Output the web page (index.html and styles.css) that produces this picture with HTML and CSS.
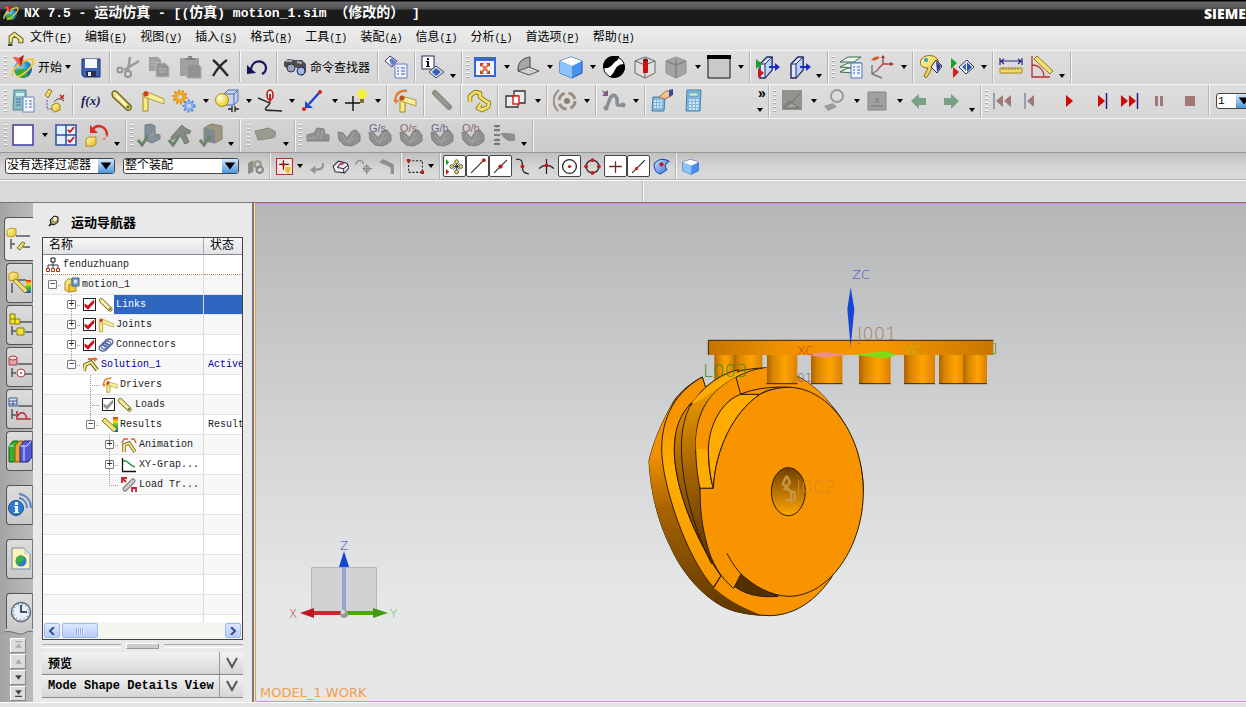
FILE: index.html
```
<!DOCTYPE html>
<html lang="zh-CN">
<head>
    <meta charset="UTF-8">
    <meta name="viewport" content="width=device-width, initial-scale=1.0">
    <title>NX 7.5 - 运动仿真</title>
    <link rel="stylesheet" href="styles.css">
</head>
<body>

<!-- icon sprite -->
<svg class="sprite" aria-hidden="true">
    <defs>
        <linearGradient id="gold" x1="0" y1="0" x2="1" y2="1"><stop offset="0" stop-color="#fffbb0"/><stop offset="1" stop-color="#e8b820"/></linearGradient>
        <linearGradient id="blue" x1="0" y1="0" x2="1" y2="1"><stop offset="0" stop-color="#c8e4ff"/><stop offset="1" stop-color="#2a72e0"/></linearGradient>
        <linearGradient id="rain" x1="0" y1="0" x2="0" y2="1"><stop offset="0" stop-color="#e02010"/><stop offset=".3" stop-color="#ffd800"/><stop offset=".6" stop-color="#30c030"/><stop offset="1" stop-color="#2050e0"/></linearGradient>
        <radialGradient id="globe" cx=".35" cy=".35" r=".8"><stop offset="0" stop-color="#8fe0f0"/><stop offset=".5" stop-color="#1f8fc8"/><stop offset="1" stop-color="#0a4a90"/></radialGradient>
        <radialGradient id="ball" cx=".35" cy=".35" r=".8"><stop offset="0" stop-color="#fffce0"/><stop offset="1" stop-color="#e8c400"/></radialGradient>
    </defs>
    <symbol id="i-nx" viewBox="0 0 24 24"><circle cx="12" cy="14" r="9" fill="url(#globe)"/><path d="M4 18c3 5 9 6 13 2l-3-6-6 0z" fill="#38a838"/><path d="M2 21C-1 16 10 5 21 4c5 2-4 14-15 18" fill="none" stroke="#f0c830" stroke-width="2"/><path d="M2 2l6 1 5-3-3 12z" fill="#c81818"/><path d="M2 2l6 1 2 9z" fill="#f06050"/></symbol>
    <symbol id="i-part" viewBox="0 0 16 16"><path d="M2 12V6l5-4 8 6v4h-4V9L7 6 5 8v4z" fill="#f4eb8a" stroke="#6e6420"/><path d="M1 14h4" stroke="#333" stroke-width="2"/></symbol>
    <symbol id="i-save" viewBox="0 0 24 24"><path d="M3 4h18v18H5l-2-2z" fill="#3f62b4" stroke="#1d2f6e"/><path d="M6 4h12v9H6z" fill="#f6f8ff"/><path d="M7 16h10v6H7z" fill="#27304e"/><path d="M9 17h3v4H9z" fill="#e8ecf8"/></symbol>
    <symbol id="i-cut" viewBox="0 0 24 24"><path d="M23 6L8 15M14 2l-2 13" stroke="#9a9a9a" stroke-width="2.500"/><circle cx="4" cy="15" r="2.500" fill="none" stroke="#929292" stroke-width="2"/><circle cx="12" cy="19" r="3" fill="none" stroke="#929292" stroke-width="2"/></symbol>
    <symbol id="i-copy" viewBox="0 0 24 24"><path d="M2 2h9l3 3v11H2z" fill="#a0a0a0"/><path d="M9 8h9l4 4v10H9z" fill="#949494" stroke="#b8b8b8"/><path d="M4 7h7M4 10h5M12 14h7M12 17h7" stroke="#bbb"/></symbol>
    <symbol id="i-paste" viewBox="0 0 24 24"><rect x="2" y="3" width="19" height="18" rx="1" fill="#a0a0a0"/><path d="M7 5V3h3V1h4v2h3v2z" fill="#858585"/><path d="M9 9h11l3 3v11H9z" fill="#929292" stroke="#aaa"/></symbol>
    <symbol id="i-x" viewBox="0 0 24 24"><path d="M4 5c5 4 10 10 15 16M18 5C12 9 8 14 4 21" fill="none" stroke="#2b2b2b" stroke-width="2.400"/></symbol>
    <symbol id="i-undo" viewBox="0 0 24 24"><path d="M5 14C7 3 20 5 20 13c0 3-2 5-4 6" fill="none" stroke="#14145c" stroke-width="2.200"/><path d="M1 10v9l9-1z" fill="#14145c"/></symbol>
    <symbol id="i-find" viewBox="0 0 24 24"><path d="M1 7l4-3 7 1 7 0 4 4v8l-4 4-3-3-1-5-5-1-3 4-6-5z" fill="#4c4c54"/><circle cx="8" cy="13" r="4" fill="#9aa4c0" stroke="#333"/><circle cx="18" cy="16" r="4" fill="#a8b8e8" stroke="#22264e"/><path d="M3 6h6M14 7l5 1" stroke="#aaa" stroke-width="2"/></symbol>
    <symbol id="i-doc-list" viewBox="0 0 24 24"><path d="M1 6l5-5 7 5-5 6z" fill="#fff" stroke="#35357a"/><path d="M5 5l3-2 4 4-4 4z" fill="#5a80d0"/><path d="M11 9h12v14H11z" fill="#eef3ff" stroke="#6a80c0"/><path d="M13 13h2M17 13h4M13 16h2M17 16h4M13 19h2M17 19h4" stroke="#3b5bc0"/></symbol>
    <symbol id="i-info" viewBox="0 0 24 24"><rect x="1" y="1" width="12" height="13" fill="#fff" stroke="#28285e"/><path d="M6 3h2v2H6zM5 6h3v5h1v1H5v-1h1V7H5z" fill="#111"/><path d="M8 17l7-6 8 6-8 6z" fill="#dfe8ff" stroke="#444"/><path d="M11 17l4-4 5 4-5 4z" fill="#3560b8"/></symbol>
    <symbol id="i-fit" viewBox="0 0 24 24"><rect x="2" y="3" width="20" height="18" fill="#f4f4ff" stroke="#3a66d0" stroke-width="2"/><path d="M1 2h22v4H1z" fill="#3a66d0"/><path d="M8 9l8 9M16 9l-8 9" stroke="#e07040" stroke-width="2"/><path d="M7 8h4l-4 4zM17 8h-4l4 4zM7 19h4l-4-4zM17 19h-4l4-4z" fill="#c04818"/></symbol>
    <symbol id="i-sketch" viewBox="0 0 24 24"><path d="M2 14c0-7 5-11 12-12v12L2 16z" fill="#a6a6a6" stroke="#444"/><path d="M2 16l11-4 10 4-10 4z" fill="#cfcfcf" stroke="#555"/></symbol>
    <symbol id="i-cube" viewBox="0 0 24 24"><path d="M1 6l11-4 11 4v12l-10 5L1 18z" fill="#4a90ee" stroke="#1450b8"/><path d="M1 6l11-4 11 4-10 5z" fill="#fff"/><path d="M1 6l12 5v12L1 18z" fill="#8cc4ff"/></symbol>
    <symbol id="i-yin" viewBox="0 0 24 24"><circle cx="12" cy="12" r="10.500" fill="#fff" stroke="#000"/><path d="M12 1C4 1 1 7 1 13c4 1 8-1 10-4 3-4 6-3 6-8-2 0-3 0-5 0zM22 9c-5 0-8 3-9 6-2 4-4 5-5 7 8 3 15-3 15-10z"/></symbol>
    <symbol id="i-box-red" viewBox="0 0 24 24"><path d="M2 6l10-4 10 4v12l-10 5-10-5zM2 6l10 4 10-4M12 10v13" fill="#e0e0e0" stroke="#666"/><path d="M10 5h5v13h-5z" fill="#d01010"/><ellipse cx="12.500" cy="5" rx="2.500" ry="1.500" fill="#701010"/></symbol>
    <symbol id="i-box-grey" viewBox="0 0 24 24"><path d="M2 6l10-4 10 4v12l-10 5-10-5z" fill="#a4a4a4" stroke="#929292"/><path d="M2 6l10 4 10-4M12 5v18" fill="none" stroke="#8a8080" stroke-width="1.500"/></symbol>
    <symbol id="i-window" viewBox="0 0 24 24"><path d="M1 1h22v22H1z" fill="#cacaca" stroke="#111"/><path d="M0 0h24v4H0z"/></symbol>
    <symbol id="i-door" viewBox="0 0 24 24"><path d="M4 9l7-7h5v13l-7 8H4z" fill="#dbe9ff" stroke="#26265c" stroke-width="1.400"/><path d="M9 9l7-7v13l-7 8zM4 9h5" fill="#b8d2fa" stroke="#26265c"/><path d="M13 11h6V8l5 4-5 4v-3h-6z" fill="#1a2ad0"/></symbol>
    <symbol id="i-door-red" viewBox="0 0 24 24"><use href="#i-door"/><path d="M0 4l6 5-6 5z" fill="#10a030"/><path d="M2 13l6 5-6 5z" fill="#d01818"/></symbol>
    <symbol id="i-layers" viewBox="0 0 24 24"><path d="M1 17l8-4h13l-8 5zM1 12l8-4h13l-8 5zM1 7l8-5h13l-7 5z" fill="#e8f4e8" stroke="#3a6c50"/><path d="M12 8h11v15H12z" fill="#eef3ff" stroke="#5070c0"/><path d="M14 12h2M18 12h3M14 15h2M18 15h3M14 18h2M18 18h3" stroke="#4060c0"/></symbol>
    <symbol id="i-csys" viewBox="0 0 24 24"><path d="M13 1v8h10M13 9l-5 5" fill="none" stroke="#b04040" stroke-width="1.400"/><path d="M11 3l2-3 2 3zM20 7l4 2-4 2z" fill="#b03030"/><path d="M2 10v9l10 4M2 19l7-5" fill="none" stroke="#777" stroke-width="1.400"/><path d="M1 5c3-4 6-4 9-3-2 3-5 4-9 3z" fill="#d06030"/></symbol>
    <symbol id="i-palette" viewBox="0 0 24 24"><path d="M2 5c3-6 14-6 17 0 2 6-3 7-5 6l-4 8-3 4-2-2 4-8C3 13 0 10 2 5z" fill="url(#gold)" stroke="#8a6d10"/><circle cx="7" cy="5" r="2" fill="#28a0b0"/><path d="M12 12l5-7 6 6-5 7z" fill="#e8eeff" stroke="#224"/><path d="M17 6l5 5-4 6z" fill="#2c3a90"/></symbol>
    <symbol id="i-tri-diamond" viewBox="0 0 24 24"><path d="M1 3l6 5-6 6z" fill="#18a028"/><path d="M3 12l6 5-6 6z" fill="#d02020"/><path d="M9 12l8-7 7 7-8 7z" fill="#f4f8ff" stroke="#334"/><path d="M12 12l4-4v8z" fill="#3a68c8"/><path d="M17 7l5 5-5 5z" fill="#2a50b0"/></symbol>
    <symbol id="i-ruler" viewBox="0 0 24 24"><path d="M1 3v7M23 3v7M2 6h20M5 4L2 6l3 3M19 4l3 2-3 3" fill="none" stroke="#26267a" stroke-width="1.200"/><path d="M1 13h22v5H1z" fill="#f4dc60" stroke="#a88820"/><path d="M4 13v2M7 13v2M10 13v2M13 13v2M16 13v2M19 13v2" stroke="#866"/></symbol>
    <symbol id="i-angle" viewBox="0 0 24 24"><path d="M2 1v21h18M2 10c7 0 12 5 12 12" fill="none" stroke="#b83030" stroke-width="1.300"/><path d="M4 4l3-3 16 15-3 3z" fill="#f6e070" stroke="#8c7820"/></symbol>
    <symbol id="i-form" viewBox="0 0 24 24"><path d="M3 1h12v20H2z" fill="#8abcc4" stroke="#4d8898"/><path d="M5 4h8v3H5z" fill="#c8f0e8"/><path d="M12 8h11v15H12z" fill="#f1f5ff" stroke="#6c84b8"/><path d="M14 12h2M18 12h3M14 15h2M18 15h3M14 18h2M18 18h3M5 10h5M5 13h5M5 16h5" stroke="#4f72b4"/></symbol>
    <symbol id="i-frame" viewBox="0 0 24 24"><path d="M3 6L7 0l3 2-4 7z" fill="url(#gold)" stroke="#8a7a20"/><path d="M5 11v9h6" fill="none" stroke="#5050a0" stroke-dasharray="2 1"/><path d="M10 16l5-2 3 2v5l-5 2-3-2z" fill="url(#gold)" stroke="#9a8418"/><path d="M12 13c4-5 7-3 10-1" fill="none" stroke="#444"/><path d="M18 6l4 4M22 6l-4 4" stroke="#c02020" stroke-width="1.400"/></symbol>
    <symbol id="i-link" viewBox="0 0 24 24"><path d="M2 5c0-3 3-4 5-2l14 14c1 3-1 5-4 4L3 8z" fill="#efe080" stroke="#736724" stroke-width="1.500"/><path d="M6 6l10 10" stroke="#fffbd0" stroke-width="2"/><circle cx="18" cy="18" r="1.500" fill="#6b6020"/></symbol>
    <symbol id="i-joint" viewBox="0 0 24 24"><path d="M2 4h5v18H2z" fill="#f6ea80" stroke="#a08b28"/><path d="M4 2l19 8v5L3 8z" fill="#f8ee9c" stroke="#b29a38"/><circle cx="5" cy="5" r="2.500" fill="#d83a20"/></symbol>
    <symbol id="i-gears" viewBox="0 0 24 24"><circle cx="8" cy="8" r="4" fill="none" stroke="#f0a828" stroke-width="4"/><circle cx="8" cy="8" r="6.500" fill="none" stroke="#d88c18" stroke-width="2" stroke-dasharray="2 2"/><circle cx="17" cy="17" r="3.500" fill="none" stroke="#80b0f4" stroke-width="3"/><circle cx="17" cy="17" r="5.500" fill="none" stroke="#4f84d4" stroke-width="2" stroke-dasharray="2 2"/></symbol>
    <symbol id="i-ballbox" viewBox="0 0 24 24"><path d="M9 5l4-4h10v11l-4 4H9z" fill="#c4d2f4" stroke="#5468a8"/><path d="M9 5h10v11M19 5l4-4" fill="none" stroke="#5468a8"/><circle cx="7" cy="11" r="6.500" fill="url(#ball)" stroke="#aa9010"/><path d="M13 20h4M20 20h4M17 17v6M20 17v6" stroke="#222" stroke-width="1.300"/></symbol>
    <symbol id="i-mouse" viewBox="0 0 24 24"><path d="M0 9l12 5c-2 4-6 5-4 7 4 1 9 0 16 1" fill="none" stroke="#222" stroke-width="1.400"/><ellipse cx="12" cy="6" rx="3" ry="5" fill="#f4e8e8" stroke="#b01818" stroke-width="1.500"/><path d="M12 5v8" stroke="#d02020" stroke-width="2"/></symbol>
    <symbol id="i-spring" viewBox="0 0 24 24"><path d="M18 4L8 15" stroke="#1c46d0" stroke-width="2.500"/><path d="M4 12v7h8z" fill="#1c46d0"/><circle cx="19" cy="3" r="2" fill="#d02020"/><circle cx="3" cy="20" r="2" fill="#d02020"/></symbol>
    <symbol id="i-point" viewBox="0 0 24 24"><path d="M1 14h15M9 7v15" stroke="#111" stroke-width="1.400"/><circle cx="18" cy="5" r="5" fill="#f8f040"/><path d="M16 10h4v4h-4z" fill="#7a7030"/></symbol>
    <symbol id="i-driver" viewBox="0 0 24 24"><path d="M7 9h5v14H7z" fill="#f6ea80" stroke="#a08b28"/><path d="M8 7l15 4v6L8 12z" fill="#f8ee9c" stroke="#b29a38"/><circle cx="9" cy="9" r="2.500" fill="#c05018"/><path d="M3 13C1 6 6 1 14 2" fill="none" stroke="#e08030" stroke-width="2.500"/><path d="M0 11h6l-3 4z" fill="#e08030"/></symbol>
    <symbol id="i-chain" viewBox="0 0 24 24"><path d="M3 13V7l5-4 5 1v4l4 3 5 3-1 4-6 3-4-2 3-4" fill="none" stroke="#857518" stroke-width="4.500" stroke-linejoin="round"/><path d="M3 13V7l5-4 5 1v4l4 3 5 3-1 4-6 3-4-2 3-4" fill="none" stroke="#f5e464" stroke-width="2.800" stroke-linejoin="round"/></symbol>
    <symbol id="i-overlap" viewBox="0 0 24 24"><path d="M10 2h11v12H10zM2 7h12v11H2z" fill="#eee" stroke="#333" stroke-width="1.300"/><path d="M9 7h6v8H9z" fill="#fff" stroke="#e02020" stroke-width="1.500"/></symbol>
    <symbol id="i-spin" viewBox="0 0 24 24"><circle cx="14" cy="12" r="8" fill="none" stroke="#988c80" stroke-width="3" stroke-dasharray="9 4"/><circle cx="14" cy="12" r="3" fill="#8c8070"/><path d="M6 1C-1 7-1 16 5 22" fill="none" stroke="#98897c" stroke-width="2"/></symbol>
    <symbol id="i-curve-grey" viewBox="0 0 24 24"><path d="M4 19c3-4 3-10 6-12s6 2 5 6 3 4 6 2" fill="none" stroke="#8a8f96" stroke-width="3.500"/><circle cx="4" cy="19" r="2.500" fill="#8a8f96"/><circle cx="21" cy="16" r="2.500" fill="#8a8f96"/><path d="M0 1l3 2 3-2v6H0l2-2z" fill="#805880"/></symbol>
    <symbol id="i-link-grey" viewBox="0 0 24 24"><path d="M5 4l14 14" stroke="#8a8f84" stroke-width="6" stroke-linecap="round"/><path d="M5 4l13 13" stroke="#a59a90" stroke-width="2"/></symbol>
    <symbol id="i-calc" viewBox="0 0 24 24"><path d="M5 1h14l-1 21H4z" fill="#7fb6dc" stroke="#447fa8"/><path d="M7 4h9v3H7z" fill="#c4f2d8" stroke="#4a8098" stroke-width=".5"/><path d="M7 11h10M7 14h10M7 17h10M7 20h9" stroke="#ecf6ff" stroke-width="1.600" stroke-dasharray="2.500 1"/></symbol>
    <symbol id="i-calc-hand" viewBox="0 0 24 24"><path d="M2 8h12l-1 14H1z" fill="#7fb6dc" stroke="#447fa8"/><path d="M3 12h9M3 15h9M3 18h9" stroke="#ecf6ff" stroke-width="1.500" stroke-dasharray="2 1"/><path d="M8 8l7-6h5v5l-6 3z" fill="#f2c490" stroke="#a87040"/><path d="M18 1l4-1v6l-4 2z" fill="#304a9c"/></symbol>
    <symbol id="i-img-grey" viewBox="0 0 24 24"><path d="M2 1h20v20H2z" fill="#92928e"/><path d="M3 17c5 2 11-8 17-12M4 19l5-7 10 7z" fill="#a5a5a0" stroke="#7c7c77" stroke-width="1.500"/></symbol>
    <symbol id="i-lens-grey" viewBox="0 0 24 24"><circle cx="14" cy="7" r="6" fill="none" stroke="#999" stroke-width="1.800"/><path d="M1 17l9-3 4 4-9 4z" fill="#9c9c96"/></symbol>
    <symbol id="i-xbox" viewBox="0 0 24 24"><path d="M2 3h18v18H2z" fill="#a0a0a0" stroke="#848484"/><path d="M9 9l4 5M13 9l-4 5M5 17h12" stroke="#777"/></symbol>
    <symbol id="i-left" viewBox="0 0 24 24"><path d="M2 12l8-7v4h7v7h-7v4z" fill="#79a082"/></symbol>
    <symbol id="i-right" viewBox="0 0 24 24"><path d="M19 12l-8-7v4H4v7h7v4z" fill="#79a082"/></symbol>
    <symbol id="i-first" viewBox="0 0 24 24"><path d="M2 4v16" stroke="#8088a0" stroke-width="1.500"/><path d="M11 6v12l-7-6zM19 6v12l-7-6z" fill="#a07878"/></symbol>
    <symbol id="i-prev" viewBox="0 0 24 24"><path d="M2 4v16" stroke="#8088a0" stroke-width="1.500"/><path d="M11 6v12l-7-6z" fill="#a07878"/></symbol>
    <symbol id="i-play" viewBox="0 0 24 24"><path d="M12 6v12l7-6z" fill="#d40808"/></symbol>
    <symbol id="i-next" viewBox="0 0 24 24"><path d="M13 6v12l7-6z" fill="#d40808"/><path d="M21.500 4v16" stroke="#202080" stroke-width="1.500"/></symbol>
    <symbol id="i-last" viewBox="0 0 24 24"><path d="M5 6v12l7-6zM13 6v12l7-6z" fill="#d40808"/><path d="M21.500 4v16" stroke="#202080" stroke-width="1.500"/></symbol>
    <symbol id="i-pause" viewBox="0 0 24 24"><path d="M8 7h3v10H8zM13 7h3v10h-3z" fill="#a07878"/></symbol>
    <symbol id="i-stop" viewBox="0 0 24 24"><path d="M7 7h10v10H7z" fill="#a07878"/></symbol>
    <symbol id="i-square" viewBox="0 0 24 24"><path d="M2 2h20v20H2z" fill="#fff" stroke="#3a3aa0" stroke-width="1.500"/></symbol>
    <symbol id="i-checks" viewBox="0 0 24 24"><path d="M2 2h20v20H2zM12 2v20M2 12h20" fill="#e4f1ff" stroke="#2f4a9c" stroke-width="1.500"/><path d="M14 7l2 2 4-5M14 17l2 2 4-5" fill="none" stroke="#d01818" stroke-width="1.800"/></symbol>
    <symbol id="i-redo-box" viewBox="0 0 24 24"><path d="M8 6c5-6 14-2 14 6" fill="none" stroke="#e02c20" stroke-width="2.400"/><path d="M22 12c0 2-2 4-6 5" fill="none" stroke="#e06030" stroke-width="2" stroke-dasharray="2 2"/><path d="M5 2v8h8z" fill="#e02c20"/><path d="M1 16l3-2h7v7l-3 2H1z" fill="url(#gold)" stroke="#b08818"/></symbol>
    <symbol id="i-g-part" viewBox="0 0 24 24"><path d="M8 2l6-1 4 2v8l5 1v4l-8 4-7-3z" fill="#838f98" stroke="#727e86"/><path d="M17 11l-7 4" stroke="#a5aeb4"/><path d="M1 17l4 5 6-9" fill="none" stroke="#6c846c" stroke-width="3"/></symbol>
    <symbol id="i-g-arm" viewBox="0 0 24 24"><path d="M3 14L14 2l3 3 6 3-2 3-4-1 4 9-4 2-5-9-8 5z" fill="#858b80" stroke="#72786c"/><path d="M1 17l4 5 6-9" fill="none" stroke="#6c846c" stroke-width="3"/></symbol>
    <symbol id="i-g-box" viewBox="0 0 24 24"><path d="M5 5l7-4 11 2v13l-7 4-11-2z" fill="#a0987e" stroke="#868070"/><path d="M5 5l11 2v13l-11-2z" fill="#7e8a90"/><path d="M1 17l4 5 6-9" fill="none" stroke="#6c846c" stroke-width="3"/></symbol>
    <symbol id="i-tag" viewBox="0 0 24 24"><path d="M1 8l14-3 6 4-2 6-15 2z" fill="#9a9a8e" stroke="#88887e"/><path d="M18 7c4 0 4 4 3 8" fill="none" stroke="#888"/></symbol>
    <symbol id="i-hill" viewBox="0 0 24 24"><path d="M1 12l7-2 3-5 7 1 1 5 4 1v6H1z" fill="#909090" stroke="#828282"/><path d="M1 15h9l3-6M14 16l3-8" fill="none" stroke="#aaa"/></symbol>
    <symbol id="i-valley" viewBox="0 0 24 24"><path d="M1 9l5 1 4 5 5-7 4-1 4 5v6l-4 3-5 2-7-1-5-5z" fill="#909090" stroke="#808080"/><path d="M5 12l6 8 6-11M11 20l8-6" fill="none" stroke="#a8a8a8"/></symbol>
    <symbol id="i-list-hand" viewBox="0 0 24 24"><path d="M2 3h6M2 7h6M2 12h6M2 17h6M2 21h6" stroke="#777" stroke-width="2"/><path d="M5 3v18" stroke="#888" stroke-dasharray="2 2"/><path d="M8 10h8l7 1v7h-7l-5-4z" fill="#928d88"/></symbol>
    <!-- 16px icons -->
    <symbol id="s-gears" viewBox="0 0 16 16"><path d="M1 5l5-3v11l-5 2z" fill="#8c8c84"/><circle cx="10" cy="6" r="3" fill="none" stroke="#98948c" stroke-width="2"/><circle cx="12" cy="11" r="3" fill="none" stroke="#8c8880" stroke-width="2"/></symbol>
    <symbol id="s-snap" viewBox="0 0 16 16"><path d="M.5.500h15v15H.5z" fill="#f6e4e0" stroke="#b03030"/><path d="M7 2v9M3 6h9" stroke="#401010"/><path d="M9 8l5 1-2 6-3-2z" fill="#e8c030"/><circle cx="7" cy="6" r="1.500" fill="#c02020"/></symbol>
    <symbol id="s-back" viewBox="0 0 16 16"><path d="M13 5c1 5-2 6-8 6" fill="none" stroke="#8c9890" stroke-width="2.200"/><path d="M6 7v8l-5-4z" fill="#8c9890"/></symbol>
    <symbol id="s-house" viewBox="0 0 16 16"><path d="M1 8l5-5 8 2 2 4-4 5-9-1z" fill="#f2f2fa" stroke="#334"/><path d="M5 9l6 1v4M5 9l4-5M11 10l4-3" fill="none" stroke="#334"/><path d="M6 6l3-2 3 1-3 2z" fill="#c8485c"/></symbol>
    <symbol id="s-rot" viewBox="0 0 16 16"><path d="M1 6c1-5 6-5 7 0M11 6v9M7 10h9" fill="none" stroke="#8a8a8a" stroke-width="1.300"/><circle cx="11" cy="10" r="2.500" fill="none" stroke="#8a8a8a"/></symbol>
    <symbol id="s-arm" viewBox="0 0 16 16"><path d="M1 4l4-3 10 5v9h-3V9L6 6z" fill="#90908a"/></symbol>
    <symbol id="s-dash" viewBox="0 0 16 16"><path d="M1.500 2.500h13v11h-13z" fill="none" stroke="#222" stroke-dasharray="2 1.500"/><path d="M0 1h3v3H0zM13 12h3v3h-3z" fill="#b02020"/></symbol>
    <symbol id="s-wheel" viewBox="0 0 16 16"><path d="M0 1l3 3-3 3z" fill="#18a028"/><path d="M0 10l3 3-3 3z" fill="#d02020"/><path d="M10 4v9M5 8h10M7 5l6 6M13 5l-6 6" stroke="#222" stroke-width=".8"/><g fill="#e8dc50" stroke="#333" stroke-width=".7"><circle cx="10" cy="3.500" r="1.800"/><circle cx="10" cy="13" r="1.800"/><circle cx="5.500" cy="8" r="1.800"/><circle cx="14" cy="8" r="1.800"/></g></symbol>
    <symbol id="s-end" viewBox="0 0 16 16"><path d="M2 14L13 3" stroke="#222"/><circle cx="14" cy="2" r="1.800" fill="#c81818"/></symbol>
    <symbol id="s-mid" viewBox="0 0 16 16"><path d="M2 14L14 2" stroke="#222"/><circle cx="8" cy="8" r="2" fill="#c81818"/></symbol>
    <symbol id="s-ctrl" viewBox="0 0 16 16"><path d="M1 1c5 0 6 1 6 7s2 6 6 7" fill="none" stroke="#222" stroke-width="1.200"/><circle cx="7" cy="8" r="1.800" fill="#c81818"/></symbol>
    <symbol id="s-inter" viewBox="0 0 16 16"><path d="M8 1v14M1 10c4-4 10-4 14 0" fill="none" stroke="#222" stroke-width="1.200"/><circle cx="8" cy="7" r="1.800" fill="#c81818"/></symbol>
    <symbol id="s-center" viewBox="0 0 16 16"><circle cx="8" cy="8" r="6.500" fill="none" stroke="#222" stroke-width="1.200"/><circle cx="8" cy="8" r="1.500" fill="#c81818"/></symbol>
    <symbol id="s-quad" viewBox="0 0 16 16"><circle cx="8" cy="8" r="6" fill="none" stroke="#222" stroke-width="1.200"/><g fill="#c81818"><circle cx="8" cy="2" r="1.800"/><circle cx="8" cy="14" r="1.800"/><circle cx="2" cy="8" r="1.800"/><circle cx="14" cy="8" r="1.800"/></g></symbol>
    <symbol id="s-plus" viewBox="0 0 16 16"><path d="M8 3v11M2 8h12" stroke="#702828" stroke-width="1.200"/></symbol>
    <symbol id="s-on" viewBox="0 0 16 16"><path d="M2 14L14 2" stroke="#222"/><circle cx="6" cy="10" r="1.500" fill="#c81818"/></symbol>
    <symbol id="s-face" viewBox="0 0 16 16"><path d="M1 6c3-5 9-6 14-3-4 2-4 6-2 8l-6 4C3 14 1 10 1 6z" fill="url(#blue)" stroke="#2850a0"/><circle cx="8" cy="6" r="2" fill="#c81818"/></symbol>
    <!-- tree icons -->
    <symbol id="t-root" viewBox="0 0 16 16"><path d="M6 1h4v4H6z" fill="#fff" stroke="#111"/><path d="M8 5v6M3 11V8h10v3" fill="none" stroke="#333"/><path d="M1.500 11.500h3v3h-3zM6.500 11.500h3v3h-3zM11.500 11.500h3v3h-3z" fill="#fff" stroke="#b83010"/></symbol>
    <symbol id="t-motion" viewBox="0 0 16 16"><path d="M1 5l3-3h4v12l-3 1-4-2z" fill="url(#gold)" stroke="#b08c18"/><path d="M5 8l7-1v7l-7 1z" fill="#f0c840" stroke="#b08c18"/><path d="M8 1h7v8H8z" fill="#7fa4c8" stroke="#3e6488"/><path d="M10 3h3v3h-3z" fill="#d8ecff"/></symbol>
    <symbol id="t-spring" viewBox="0 0 16 16"><g fill="none" stroke="#5668a0" stroke-width="1.300"><ellipse cx="5" cy="11" rx="4" ry="3"/><ellipse cx="7" cy="9" rx="4" ry="3"/><ellipse cx="9" cy="7" rx="4" ry="3"/><ellipse cx="11" cy="5" rx="4" ry="3"/></g></symbol>
    <symbol id="t-solution" viewBox="0 0 16 16"><path d="M1 14l1-6 6-3 6 8" fill="none" stroke="#6c6020" stroke-width="4"/><path d="M1 14l1-6 6-3 6 8" fill="none" stroke="#f4e888" stroke-width="2"/><path d="M5 1h6V0l4 2-4 3V3H5z" fill="#e07040"/></symbol>
    <symbol id="t-results" viewBox="0 0 16 16"><path d="M11 0h5v15h-5z" fill="url(#rain)"/><path d="M0 4l3-3 12 11-3 3z" fill="#f2e37a" stroke="#85701c"/></symbol>
    <symbol id="t-anim" viewBox="0 0 16 16"><path d="M3 15V8l5-2 6 9" fill="none" stroke="#7e6c20" stroke-width="3.500"/><path d="M3 15V8l5-2 6 9" fill="none" stroke="#f6e98c" stroke-width="1.800"/><path d="M1 6l2-4h4M10 2h3l2 4" fill="none" stroke="#d06040" stroke-width="1.500"/></symbol>
    <symbol id="t-graph" viewBox="0 0 16 16"><path d="M1.500 1v13.500H15" fill="none" stroke="#111" stroke-width="1.300"/><path d="M2 4c5-2 6 5 12 6" fill="none" stroke="#18902c" stroke-width="1.400"/></symbol>
    <symbol id="t-load" viewBox="0 0 16 16"><path d="M4 12l8-8" stroke="#777" stroke-width="5" stroke-linecap="round"/><path d="M4 12l8-8" stroke="#ccc" stroke-width="3" stroke-linecap="round"/><path d="M1 6V1h5M1 1l4 4M11 15v-4h4v4" fill="none" stroke="#c82030" stroke-width="1.800"/></symbol>
    <!-- dock icons -->
    <symbol id="d-nav" viewBox="0 0 24 24"><path d="M1 3l4-2 5 1v6l-4 2-5-1z" fill="url(#gold)" stroke="#b89820"/><path d="M10 9h14M5 12v10M5 17h4M17 20h7" stroke="#556" stroke-width="1.500"/><path d="M11 21l5-6 3 1-5 7z" fill="#f0e070" stroke="#857420"/></symbol>
    <symbol id="d-result" viewBox="0 0 24 24"><path d="M1 3l4-2 5 1v6l-4 2-5-1z" fill="url(#gold)" stroke="#b89820"/><path d="M10 9h8M4 12v10" stroke="#556" stroke-width="1.500"/><path d="M18 9h5v13h-5z" fill="url(#rain)"/><path d="M5 10l3-2 12 11-3 3z" fill="#f0e070" stroke="#857420"/></symbol>
    <symbol id="d-assy" viewBox="0 0 24 24"><path d="M2 1h5v5h5v5H2zM2 6h5v5M9 15h7v7H9z" fill="#f2e430" stroke="#857a10"/><path d="M12 9h12M4 13v9M4 18h4M17 19h7" stroke="#556" stroke-width="1.500" fill="none"/></symbol>
    <symbol id="d-constr" viewBox="0 0 24 24"><path d="M1 3h8v7H1z" fill="#eaa4a8" stroke="#a04048"/><ellipse cx="5" cy="3" rx="4" ry="2" fill="#f8d8d8" stroke="#a04048"/><path d="M10 9h14M4 13v9M4 18h4M17 19h7" stroke="#556" stroke-width="1.500"/><circle cx="13" cy="18" r="4" fill="#fff" stroke="#a04048"/><circle cx="13" cy="18" r="1" fill="#a04048"/></symbol>
    <symbol id="d-part" viewBox="0 0 24 24"><path d="M1 1h8v8H1zM1 4h8M1 7h8M5 4v5" fill="#dbe6fa" stroke="#405890"/><path d="M10 9h14M4 12v10M4 18h4" stroke="#556" stroke-width="1.500"/><path d="M9 14v8h14M9 20c3-6 8-6 10 2" fill="none" stroke="#b03038" stroke-width="1.500"/></symbol>
    <symbol id="d-books" viewBox="0 0 24 24"><path d="M1 7l4-5h5v16l-4 5H1z" fill="#35b030" stroke="#145a18"/><path d="M7 7l4-5h4v16l-3 5H7z" fill="#f0a030" stroke="#82580c"/><path d="M12 7l4-5h8v16l-4 5h-8z" fill="#5656d8" stroke="#20207c"/><path d="M1 7h5M12 7h7l4-5M16 7v15" fill="none" stroke="#d8e8ff"/></symbol>
    <symbol id="d-info" viewBox="0 0 24 24"><circle cx="8" cy="15" r="7.500" fill="#2c7cd0" stroke="#185098"/><path d="M7 9h3v3H7zM6 13h4v6h1v1H6v-1h1v-5H6z" fill="#fff"/><path d="M11 5c5 1 8 5 8 10M11 1c8 1 12 7 12 14" fill="none" stroke="#5c84c0" stroke-width="2"/></symbol>
    <symbol id="d-web" viewBox="0 0 24 24"><path d="M4 1h12l6 6v15H4z" fill="#fcf4b0" stroke="#7088b8"/><path d="M16 1v6h6z" fill="#c8d8f4"/><circle cx="13" cy="14" r="5.500" fill="#3078c8"/><path d="M9 10c4-3 7-1 7 2s-5 3-5 6c-3-1-4-5-2-8z" fill="#3cb048"/></symbol>
    <symbol id="d-clock" viewBox="0 0 24 24"><circle cx="13" cy="12" r="9.500" fill="#e6eff8" stroke="#5c6c7c" stroke-width="1.500"/><path d="M13 5v7h6" fill="none" stroke="#123" stroke-width="1.500"/><circle cx="13" cy="12" r="7.500" fill="none" stroke="#456" stroke-dasharray="1 3"/></symbol>
    <symbol id="a-down" viewBox="0 0 8 8"><path d="M1 2h6L4 6z"/></symbol>
</svg>

<header class="titlebar">
    <svg class="app-icon"><use href="#i-nx"/></svg>
    <h1>NX 7.5 - <span>运动仿真</span> - [(<span>仿真</span>) motion_1.sim <span>（修改的）</span> ]</h1>
    <div class="brand"><b>SIEMENS</b></div>
</header>

<nav class="menubar">
    <svg class="part-icon"><use href="#i-part"/></svg>
    <button>文件<span>(<u>F</u>)</span></button>
    <button>编辑<span>(<u>E</u>)</span></button>
    <button>视图<span>(<u>V</u>)</span></button>
    <button>插入<span>(<u>S</u>)</span></button>
    <button>格式<span>(<u>R</u>)</span></button>
    <button>工具<span>(<u>T</u>)</span></button>
    <button>装配<span>(<u>A</u>)</span></button>
    <button>信息<span>(<u>I</u>)</span></button>
    <button>分析<span>(<u>L</u>)</span></button>
    <button>首选项<span>(<u>P</u>)</span></button>
    <button>帮助<span>(<u>H</u>)</span></button>
</nav>

<div class="toolbar-row">
    <div class="toolbar">
        <button class="tool wide"><svg><use href="#i-nx"/></svg>开始<svg class="caret"><use href="#a-down"/></svg></button>
        <button class="tool" aria-label="保存"><svg><use href="#i-save"/></svg></button>
        <i class="sep"></i>
        <button class="tool" aria-label="剪切"><svg><use href="#i-cut"/></svg></button>
        <button class="tool" aria-label="复制"><svg><use href="#i-copy"/></svg></button>
        <button class="tool" aria-label="粘贴"><svg><use href="#i-paste"/></svg></button>
        <button class="tool" aria-label="删除"><svg><use href="#i-x"/></svg></button>
        <i class="sep"></i>
        <button class="tool" aria-label="撤消"><svg><use href="#i-undo"/></svg></button>
        <i class="sep"></i>
        <button class="tool finder"><svg><use href="#i-find"/></svg>命令查找器</button>
        <i class="sep"></i>
        <button class="tool" aria-label="属性"><svg><use href="#i-doc-list"/></svg></button>
        <i class="sep"></i>
        <button class="tool" aria-label="信息"><svg><use href="#i-info"/></svg></button>
        <button class="more" aria-label="选项"><svg><use href="#a-down"/></svg></button>
    </div>
    <div class="toolbar">
        <button class="tool" aria-label="适合窗口"><svg><use href="#i-fit"/></svg></button>
        <button class="drop" aria-label="更多"><svg><use href="#a-down"/></svg></button>
        <button class="tool" aria-label="定向视图"><svg><use href="#i-sketch"/></svg></button>
        <button class="drop" aria-label="更多"><svg><use href="#a-down"/></svg></button>
        <button class="tool" aria-label="着色"><svg><use href="#i-cube"/></svg></button>
        <button class="drop" aria-label="更多"><svg><use href="#a-down"/></svg></button>
        <button class="tool" aria-label="对比"><svg><use href="#i-yin"/></svg></button>
        <button class="tool" aria-label="剖切"><svg><use href="#i-box-red"/></svg></button>
        <button class="tool" aria-label="编辑剖切"><svg><use href="#i-box-grey"/></svg></button>
        <button class="drop" aria-label="更多"><svg><use href="#a-down"/></svg></button>
        <button class="tool" aria-label="背景"><svg><use href="#i-window"/></svg></button>
        <button class="drop" aria-label="更多"><svg><use href="#a-down"/></svg></button>
        <i class="sep"></i>
        <button class="tool" aria-label="显示和隐藏"><svg><use href="#i-door-red"/></svg></button>
        <button class="tool" aria-label="隐藏"><svg><use href="#i-door"/></svg></button>
        <button class="more" aria-label="选项"><svg><use href="#a-down"/></svg></button>
    </div>
    <div class="toolbar">
        <button class="tool" aria-label="图层"><svg><use href="#i-layers"/></svg></button>
        <button class="tool" aria-label="坐标系"><svg><use href="#i-csys"/></svg></button>
        <button class="drop" aria-label="更多"><svg><use href="#a-down"/></svg></button>
        <i class="sep"></i>
        <button class="tool" aria-label="编辑显示"><svg><use href="#i-palette"/></svg></button>
        <button class="tool" aria-label="显示"><svg><use href="#i-tri-diamond"/></svg></button>
        <button class="drop" aria-label="更多"><svg><use href="#a-down"/></svg></button>
        <i class="sep"></i>
        <button class="tool" aria-label="测量距离"><svg><use href="#i-ruler"/></svg></button>
        <button class="tool" aria-label="测量角度"><svg><use href="#i-angle"/></svg></button>
        <button class="more" aria-label="选项"><svg><use href="#a-down"/></svg></button>
    </div>
</div>

<div class="toolbar-row">
    <div class="toolbar motion">
        <button class="tool" aria-label="环境"><svg><use href="#i-form"/></svg></button>
        <button class="tool" aria-label="主模型"><svg><use href="#i-frame"/></svg></button>
        <i class="sep"></i>
        <button class="tool fx">f(x)</button>
        <button class="tool" aria-label="连杆"><svg><use href="#i-link"/></svg></button>
        <button class="tool" aria-label="运动副"><svg><use href="#i-joint"/></svg></button>
        <button class="tool" aria-label="齿轮副"><svg><use href="#i-gears"/></svg></button>
        <button class="drop" aria-label="更多"><svg><use href="#a-down"/></svg></button>
        <button class="tool" aria-label="连接器"><svg><use href="#i-ballbox"/></svg></button>
        <button class="drop" aria-label="更多"><svg><use href="#a-down"/></svg></button>
        <button class="tool" aria-label="约束"><svg><use href="#i-mouse"/></svg></button>
        <button class="drop" aria-label="更多"><svg><use href="#a-down"/></svg></button>
        <button class="tool" aria-label="载荷"><svg><use href="#i-spring"/></svg></button>
        <button class="drop" aria-label="更多"><svg><use href="#a-down"/></svg></button>
        <button class="tool" aria-label="智能点"><svg><use href="#i-point"/></svg></button>
        <button class="drop" aria-label="更多"><svg><use href="#a-down"/></svg></button>
        <i class="sep"></i>
        <button class="tool" aria-label="驱动"><svg><use href="#i-driver"/></svg></button>
        <i class="sep"></i>
        <button class="tool" aria-label="柔性连杆"><svg><use href="#i-link-grey"/></svg></button>
        <i class="sep"></i>
        <button class="tool" aria-label="链"><svg><use href="#i-chain"/></svg></button>
        <i class="sep"></i>
        <button class="tool" aria-label="干涉"><svg><use href="#i-overlap"/></svg></button>
        <button class="drop" aria-label="更多"><svg><use href="#a-down"/></svg></button>
        <i class="sep"></i>
        <button class="tool" aria-label="动画"><svg><use href="#i-spin"/></svg></button>
        <button class="drop" aria-label="更多"><svg><use href="#a-down"/></svg></button>
        <i class="sep"></i>
        <button class="tool" aria-label="作图"><svg><use href="#i-curve-grey"/></svg></button>
        <button class="drop" aria-label="更多"><svg><use href="#a-down"/></svg></button>
        <i class="sep"></i>
        <button class="tool" aria-label="解算方案"><svg><use href="#i-calc-hand"/></svg></button>
        <button class="tool" aria-label="求解"><svg><use href="#i-calc"/></svg></button>
        <button class="more chevrons"><span>»</span><svg><use href="#a-down"/></svg></button>
    </div>
    <div class="toolbar">
        <button class="tool" aria-label="图像"><svg><use href="#i-img-grey"/></svg></button>
        <button class="drop" aria-label="更多"><svg><use href="#a-down"/></svg></button>
        <button class="tool" aria-label="查看"><svg><use href="#i-lens-grey"/></svg></button>
        <button class="drop" aria-label="更多"><svg><use href="#a-down"/></svg></button>
        <button class="tool" aria-label="变量"><svg><use href="#i-xbox"/></svg></button>
        <button class="drop" aria-label="更多"><svg><use href="#a-down"/></svg></button>
        <button class="tool" aria-label="后退"><svg><use href="#i-left"/></svg></button>
        <button class="tool" aria-label="前进"><svg><use href="#i-right"/></svg></button>
        <button class="more" aria-label="选项"><svg><use href="#a-down"/></svg></button>
    </div>
    <div class="toolbar">
        <button class="tool" aria-label="第一步"><svg><use href="#i-first"/></svg></button>
        <button class="tool" aria-label="上一步"><svg><use href="#i-prev"/></svg></button>
        <button class="tool" aria-label="播放"><svg><use href="#i-play"/></svg></button>
        <button class="tool" aria-label="下一步"><svg><use href="#i-next"/></svg></button>
        <button class="tool" aria-label="最后一步"><svg><use href="#i-last"/></svg></button>
        <button class="tool" aria-label="暂停"><svg><use href="#i-pause"/></svg></button>
        <button class="tool" aria-label="停止"><svg><use href="#i-stop"/></svg></button>
        <i class="sep"></i>
        <label class="combo speed"><select aria-label="速度"><option>1</option><option>2</option></select><i><svg><use href="#a-down"/></svg></i></label>
    </div>
</div>

<div class="toolbar-row tall">
    <div class="toolbar">
        <button class="tool" aria-label="单视图"><svg><use href="#i-square"/></svg></button>
        <button class="drop" aria-label="更多"><svg><use href="#a-down"/></svg></button>
        <button class="tool" aria-label="布局"><svg><use href="#i-checks"/></svg></button>
        <button class="tool" aria-label="更新"><svg><use href="#i-redo-box"/></svg></button>
        <button class="more" aria-label="选项"><svg><use href="#a-down"/></svg></button>
    </div>
    <div class="toolbar">
        <button class="tool" aria-label="检查部件"><svg><use href="#i-g-part"/></svg></button>
        <button class="tool" aria-label="检查机构"><svg><use href="#i-g-arm"/></svg></button>
        <button class="tool" aria-label="检查装配"><svg><use href="#i-g-box"/></svg></button>
        <button class="more" aria-label="选项"><svg><use href="#a-down"/></svg></button>
    </div>
    <div class="toolbar tags">
        <button class="tool" aria-label="标签"><svg><use href="#i-tag"/></svg></button>
        <button class="more" aria-label="选项"><svg><use href="#a-down"/></svg></button>
    </div>
    <div class="toolbar">
        <button class="tool" aria-label="曲面"><svg><use href="#i-hill"/></svg></button>
        <button class="tool" aria-label="凹面"><svg><use href="#i-valley"/></svg></button>
        <button class="tool marked"><svg><use href="#i-valley"/></svg><span class="blue">G/s</span></button>
        <button class="tool marked"><svg><use href="#i-valley"/></svg><span>O/s</span></button>
        <button class="tool marked"><svg><use href="#i-valley"/></svg><span class="blue">G/h</span></button>
        <button class="tool marked"><svg><use href="#i-valley"/></svg><span>O/h</span></button>
        <button class="tool" aria-label="列表"><svg><use href="#i-list-hand"/></svg></button>
        <button class="more" aria-label="选项"><svg><use href="#a-down"/></svg></button>
    </div>
</div>

<div class="selectbar">
    <label class="combo filter"><select aria-label="类型过滤器"><option>没有选择过滤器</option></select><i><svg><use href="#a-down"/></svg></i></label>
    <label class="combo scope"><select aria-label="选择范围"><option>整个装配</option></select><i><svg><use href="#a-down"/></svg></i></label>
    <button class="snap" aria-label="关联"><svg><use href="#s-gears"/></svg></button>
    <i class="sep"></i>
    <button class="snap" aria-label="捕捉"><svg><use href="#s-snap"/></svg></button>
    <button class="drop" aria-label="更多"><svg><use href="#a-down"/></svg></button>
    <button class="snap" aria-label="返回"><svg><use href="#s-back"/></svg></button>
    <button class="snap" aria-label="面"><svg><use href="#s-house"/></svg></button>
    <button class="snap" aria-label="旋转"><svg><use href="#s-rot"/></svg></button>
    <button class="snap" aria-label="移动"><svg><use href="#s-arm"/></svg></button>
    <i class="sep"></i>
    <button class="snap" aria-label="矩形"><svg><use href="#s-dash"/></svg></button>
    <button class="drop" aria-label="更多"><svg><use href="#a-down"/></svg></button>
    <i class="sep"></i>
    <button class="snap on" aria-label="启用捕捉点"><svg><use href="#s-wheel"/></svg></button>
    <button class="snap on" aria-label="端点"><svg><use href="#s-end"/></svg></button>
    <button class="snap on" aria-label="中点"><svg><use href="#s-mid"/></svg></button>
    <button class="snap" aria-label="控制点"><svg><use href="#s-ctrl"/></svg></button>
    <button class="snap" aria-label="交点"><svg><use href="#s-inter"/></svg></button>
    <button class="snap on" aria-label="圆心"><svg><use href="#s-center"/></svg></button>
    <button class="snap" aria-label="象限点"><svg><use href="#s-quad"/></svg></button>
    <button class="snap on" aria-label="现有点"><svg><use href="#s-plus"/></svg></button>
    <button class="snap on" aria-label="曲线上的点"><svg><use href="#s-on"/></svg></button>
    <button class="snap" aria-label="面上的点"><svg><use href="#s-face"/></svg></button>
    <i class="sep"></i>
    <button class="snap" aria-label="实体"><svg><use href="#i-cube"/></svg></button>
</div>

<div class="cueline"><div></div><div></div></div>

<main class="workspace">
    <div class="dock">
        <button class="tab active" aria-label="运动导航器"><svg><use href="#d-nav"/></svg></button>
        <button class="tab" aria-label="结果"><svg><use href="#d-result"/></svg></button>
        <button class="tab" aria-label="装配导航器"><svg><use href="#d-assy"/></svg></button>
        <button class="tab" aria-label="约束导航器"><svg><use href="#d-constr"/></svg></button>
        <button class="tab" aria-label="部件导航器"><svg><use href="#d-part"/></svg></button>
        <button class="tab" aria-label="重用库"><svg><use href="#d-books"/></svg></button>
        <button class="tab apart" aria-label="信息"><svg><use href="#d-info"/></svg></button>
        <button class="tab apart" aria-label="浏览器"><svg><use href="#d-web"/></svg></button>
        <button class="tab apart torn" aria-label="历史"><svg><use href="#d-clock"/></svg></button>
        <svg class="tear" viewBox="0 0 29 6"><path d="M2 0h27v3c-5-2-7 1-11 2S8 1 0 3z" fill="#c8c8c8"/><path d="M0 3c8-2 14 3 18 2s6-4 11-2" fill="none" stroke="#666"/></svg>
        <div class="dock-scroll">
            <button aria-label="顶部" disabled><svg viewBox="0 0 8 8"><path d="M1 0h6v1H1zM1 6h6L4 2z"/></svg></button>
            <button aria-label="向上" disabled><svg viewBox="0 0 8 8"><path d="M1 6h6L4 2z"/></svg></button>
            <button aria-label="向下"><svg viewBox="0 0 8 8"><path d="M1 2h6L4 6z"/></svg></button>
            <button aria-label="底部"><svg viewBox="0 0 8 8"><path d="M1 1h6L4 5zM1 6h6v1H1z"/></svg></button>
        </div>
    </div>

    <aside class="navigator">
        <h2><svg viewBox="0 0 12 12"><path d="M1 11l3-3" stroke="#000" stroke-width="1.500"/><path d="M2 5l4-4 4 1v5l-4 3-3-1z" fill="#a8a068" stroke="#111"/><circle cx="7" cy="4" r="2" fill="#fffbd0"/></svg>运动导航器</h2>

        <div class="tree">
            <div class="tree-view">
                <table>
                    <thead>
                        <tr><th>名称</th><th>状态</th></tr>
                    </thead>
                    <tbody>
                        <tr class="root"><td><div class="node"><svg><use href="#t-root"/></svg>fenduzhuanp</div></td><td></td></tr>
                        <tr><td><div class="node l1"><span class="branch top"><button>−</button></span><svg><use href="#t-motion"/></svg>motion_1</div></td><td></td></tr>
                        <tr class="selected"><td><div class="node l2"><span class="branch"><button>+</button></span><input type="checkbox" id="links" checked><svg><use href="#i-link"/></svg><label for="links">Links</label></div></td><td></td></tr>
                        <tr><td><div class="node l2"><span class="branch"><button>+</button></span><input type="checkbox" id="joints" checked><svg><use href="#i-joint"/></svg><label for="joints">Joints</label></div></td><td></td></tr>
                        <tr><td><div class="node l2"><span class="branch"><button>+</button></span><input type="checkbox" id="connectors" checked><svg><use href="#t-spring"/></svg><label for="connectors">Connectors</label></div></td><td></td></tr>
                        <tr class="current"><td><div class="node l2"><span class="branch last"><button>−</button></span><svg><use href="#t-solution"/></svg>Solution_1</div></td><td>Active</td></tr>
                        <tr><td><div class="node l3"><span class="branch"></span><svg><use href="#i-driver"/></svg>Drivers</div></td><td></td></tr>
                        <tr><td><div class="node l3"><span class="branch"></span><input type="checkbox" id="loads" class="dim" checked><svg><use href="#i-link"/></svg><label for="loads">Loads</label></div></td><td></td></tr>
                        <tr><td><div class="node l3"><span class="branch last"><button>−</button></span><svg><use href="#t-results"/></svg>Results</div></td><td>Result</td></tr>
                        <tr><td><div class="node l4"><span class="branch"><button>+</button></span><svg><use href="#t-anim"/></svg>Animation</div></td><td></td></tr>
                        <tr><td><div class="node l4"><span class="branch"><button>+</button></span><svg><use href="#t-graph"/></svg>XY-Grap...</div></td><td></td></tr>
                        <tr><td><div class="node l4"><span class="branch last"></span><svg><use href="#t-load"/></svg>Load Tr...</div></td><td></td></tr>
                        <tr><td></td><td></td></tr>
                        <tr><td></td><td></td></tr>
                        <tr><td></td><td></td></tr>
                        <tr><td></td><td></td></tr>
                        <tr><td></td><td></td></tr>
                        <tr><td></td><td></td></tr>
                        <tr><td></td><td></td></tr>
                    </tbody>
                </table>
            </div>
            <div class="hscroll">
                <button aria-label="向左"><svg viewBox="0 0 8 8"><path d="M6 0L2 4l4 4"/></svg></button>
                <div class="thumb"><i></i></div>
                <button aria-label="向右"><svg viewBox="0 0 8 8"><path d="M2 0l4 4-4 4"/></svg></button>
            </div>
        </div>

        <div class="splitter"><i></i></div>
        <button class="fold">预览<svg viewBox="0 0 12 12"><path d="M1 1l5 9 5-9"/></svg></button>
        <button class="fold"><span>Mode Shape Details View</span><svg viewBox="0 0 12 12"><path d="M1 1l5 9 5-9"/></svg></button>
    </aside>

    <section class="graphics">
        <svg class="scene" viewBox="256 205 990 497" preserveAspectRatio="xMidYMid meet">
            <defs>
                <linearGradient id="peg" x1="0" x2="1"><stop offset="0" stop-color="#a86200"/><stop offset=".2" stop-color="#d88400"/><stop offset=".6" stop-color="#ffa400"/><stop offset="1" stop-color="#d88000"/></linearGradient>
                <linearGradient id="plate" x1="0" x2="1"><stop offset="0" stop-color="#c47400"/><stop offset=".25" stop-color="#ee9000"/><stop offset=".6" stop-color="#f79600"/><stop offset="1" stop-color="#c87800"/></linearGradient>
                <linearGradient id="rim" x1="0" y1="0" x2="0" y2="1"><stop offset="0" stop-color="#f79600"/><stop offset=".25" stop-color="#f09000"/><stop offset=".5" stop-color="#a86400"/><stop offset="1" stop-color="#5e3600"/></linearGradient>
                <linearGradient id="groove" x1="0" y1="0" x2="0" y2="1"><stop offset="0" stop-color="#ffa800"/><stop offset=".45" stop-color="#ad6800"/><stop offset="1" stop-color="#4e2d00"/></linearGradient>
                <linearGradient id="band" x1="0" y1="0" x2="0" y2="1"><stop offset="0" stop-color="#f79400"/><stop offset=".2" stop-color="#f79400"/><stop offset=".45" stop-color="#ffb000"/><stop offset="1" stop-color="#f79400"/></linearGradient>
                <linearGradient id="bore" x1="0" y1="0" x2="0" y2="1"><stop offset="0" stop-color="#6e4000"/><stop offset=".5" stop-color="#b87000"/><stop offset="1" stop-color="#ffa800"/></linearGradient>
            </defs>
            <!-- model, drawn at three times its size -->
            <g transform="translate(630 250) scale(.33333)">
                <g fill="url(#peg)">
                    <path d="M253 318h57v82h-57z"/>
                    <path d="M310 318h87v82h-87z"/>
                </g>
                <g stroke="#2a1a00" stroke-width="3" stroke-linejoin="round">
                    <path fill="#f79400" d="M217 384C175 405 140 440 128 462 95 520 70 580 57 635 62 740 90 830 120 890 150 960 200 1020 250 1055 290 1085 340 1098 420 1100 500 1098 560 1050 605 985L700 728C700 620 650 520 605 470 560 410 490 360 410 357 350 357 290 370 225 415z"/>
                    <path fill="url(#rim)" stroke="none" d="M128 462C95 520 70 580 57 635 62 740 90 830 120 890 150 960 200 1020 250 1055 290 1085 340 1098 400 1100 330 1075 290 1050 250 1015 190 950 145 830 115 720 95 640 85 560 128 462z"/>
                    <path fill="url(#band)" d="M217 384C160 415 95 480 95 600 95 700 165 920 250 1015L273 980C200 880 133 720 133 600 133 530 165 475 195 452L228 418z"/>
                    <path fill="url(#groove)" d="M190 458C140 500 133 560 133 610 135 720 200 880 273 980 245 950 215 830 210 718L197 600C197 500 220 440 318 385L325 362C260 378 215 420 190 458z"/>
                    <path fill="none" d="M190 458C155 500 152 580 155 620 160 730 200 860 245 945"/>
                    <path fill="#ffab00" stroke="none" d="M410 357C320 362 240 390 185 462 200 470 250 420 318 385z"/>
                    <path fill="#ffab00" d="M318 385C240 425 197 490 197 600 198 650 204 690 210 718H250C240 690 235 640 235 600 238 510 290 445 333 436z"/>
                    <path fill="#f79400" d="M318 385C240 425 197 490 197 600L235 600C238 510 290 445 332 436z" stroke="none"/>
                    <path fill="#f79400" d="M318 385L332 436C380 420 430 414 480 415L410 400V357C380 357 350 368 318 385z"/>
                    <path fill="#f79400" stroke="none" d="M400 357C490 360 560 410 605 470L480 415 400 412z"/>
                    <path fill="#ffab00" d="M332 436C280 455 238 520 235 600 236 650 242 690 250 718 256 600 310 490 390 436z"/>
                    <path fill="#f79400" d="M332 436C370 418 430 412 480 415 430 417 405 425 390 436z"/>
                    <path fill="#543000" d="M333 975L315 1013C350 1040 400 1046 445 1042z"/>
                    <path fill="#f79400" d="M210 718H250C256 600 310 490 390 436 420 420 450 415 480 415 600 420 700 560 700 728 700 890 600 1042 475 1042 420 1040 370 1010 333 975L311 1018C270 985 245 940 232 890 215 830 210 780 210 718z"/>
                    <path fill="none" d="M291 913C305 940 318 958 333 975M273 980L252 1015"/>
                    <ellipse cx="475" cy="728" rx="51" ry="72" fill="url(#bore)"/>
                </g>
                <path d="M470 680l-12 24 26 26-2 24-16-2M470 680l10 20-16 20 30 10 0 24-14 4" fill="none" stroke="#c8963c" stroke-width="7"/>
                <g fill="url(#peg)">
                    <path d="M411 318h91v86h-91z"/>
                    <path d="M543 318h94v86h-94z"/>
                    <path d="M687 318h95v86h-95z"/>
                    <path d="M822 318h93v86h-93z"/>
                    <path d="M927 318h83v86h-83z"/>
                    <path d="M1000 318h71v86h-71z"/>
                </g>
                <path d="M409 404h93M543 404h94M687 404h95M822 404h93M927 404h144" stroke="#3c2400" stroke-width="3"/>
                <path d="M235 273h855v45H235z" fill="url(#plate)"/>
                <path d="M235 318V274h855" fill="none" stroke="#3c2400" stroke-width="3"/>
                <path d="M1090 284h7v30h-8" fill="none" stroke="#58a038" stroke-width="3"/>
                <path d="M662 115l11 65-11 115-10-115z" fill="#1446d8"/>
                <path d="M525 317l60-8 70 8-70 9z" fill="#f09080"/>
                <path d="M668 317l100-10 32 10-32 11z" fill="#80dc18"/>
            </g>
            <g class="labels">
                <text x="852" y="280" fill="#3c50c8">ZC</text>
                <text x="857" y="341" fill="#a08458" class="big">J001</text>
                <text x="797" y="356" fill="#c83c18">XC</text>
                <text x="905" y="356" fill="#a8c818">YC</text>
                <text x="703" y="378" fill="#3c8c28" class="big">L003</text>
                <text x="797" y="383" fill="#4c5890" class="small">01</text>
                <text x="796" y="494" fill="#d88c1c" class="big">J002</text>
            </g>
            <!-- view triad -->
            <path d="M311.500 568.500h65v44h-65z" fill="#d0d1d2" stroke="#b4b5b6"/>
            <path d="M342 566h4v46h-4z" fill="#98a4d0"/>
            <path d="M344 552l5 16h-10z" fill="#1446d8"/>
            <path d="M314 612h28v4h-28z" fill="#c82830"/><path d="M300 614l14-5v10z" fill="#c01820"/>
            <path d="M346 612h28v4h-28z" fill="#48a808"/><path d="M388 614l-15-5v10z" fill="#409c08"/>
            <circle cx="344" cy="615" r="4" fill="#9a9a9a"/><circle cx="343" cy="613" r="2" fill="#ddd"/>
            <g class="labels small">
                <text x="340" y="551" fill="#3040c0">Z</text>
                <text x="289" y="619" fill="#c03040">X</text>
                <text x="390" y="619" fill="#68b840">Y</text>
            </g>
        </svg>
        <p class="view-name">MODEL_1 WORK</p>
    </section>
</main>

<footer class="bottom"></footer>

</body>
</html>
```
FILE: styles.css
```
* {
    box-sizing: border-box;
}

body {
    margin: 0;
    height: 100vh;
    display: flex;
    flex-direction: column;
    overflow: hidden;
    background: #dcdcdc;
    color: #000;
    font-family: "Liberation Mono", "Noto Sans CJK SC", monospace;
    font-size: 12px;
}

button, select {
    font: inherit;
    color: inherit;
    background: none;
    border: 0;
    padding: 0;
    margin: 0;
}

svg {
    display: block;
    flex: none;
}

.sprite {
    position: absolute;
    width: 0;
    height: 0;
}

/* title and menu */
.titlebar {
    height: 26px;
    flex: none;
    display: flex;
    align-items: center;
    padding-left: 3px;
    background: linear-gradient(#000 0, #000 1px, #6a6a6c 2px, #505052 9px, #1c1c1c 10px, #1a1a1a 100%);
    color: #fff;
}

.app-icon {
    width: 16px;
    height: 16px;
}

.titlebar h1 {
    margin: 0 auto 0 5px;
    font-size: 13px;
    line-height: 18px;
    white-space: pre;
}

.titlebar h1 span {
    font-size: 14px;
}

.brand {
    width: 42px;
    overflow: hidden;
    font-family: "Open Sans", sans-serif;
    font-size: 14px;
}

.brand b {
    font-weight: 800;
}

.menubar {
    height: 24px;
    flex: none;
    display: flex;
    align-items: center;
    gap: 13px;
    padding-left: 7px;
    background: linear-gradient(#ececec, #e2e2e2);
}

.part-icon {
    width: 17px;
    height: 17px;
    margin-right: -7px;
}

.menubar button {
    line-height: 20px;
    white-space: nowrap;
}

.menubar span {
    font-size: 10px;
}

/* toolbars */
.toolbar-row {
    height: 34px;
    flex: none;
    display: flex;
    background: linear-gradient(#dedede, #d6d6d6);
    border-top: 1px solid #f4f4f4;
}

.toolbar-row.tall {
    height: 35px;
    background: linear-gradient(#d4d4d4, #cacaca);
    border-bottom: 1px solid #999;
}

.toolbar {
    display: flex;
    align-items: center;
    flex: none;
    padding-bottom: 2px;
    border-right: 1px solid #b4b4b4;
    box-shadow: 1px 0 #f4f4f4;
}

.toolbar::before {
    content: "";
    width: 3px;
    height: 22px;
    margin: 0 1px 0 4px;
    background: repeating-linear-gradient(#fff 0, #fff 1px, #a8a8a8 1px, #a8a8a8 2px, transparent 2px, transparent 4px);
}

.tool {
    width: 31px;
    height: 30px;
    flex: none;
    display: flex;
    align-items: center;
    padding-left: 3px;
}

.tool svg {
    width: 24px;
    height: 24px;
}

.tool.wide {
    width: 68px;
    gap: 3px;
    white-space: nowrap;
}

.tool.finder {
    width: 95px;
    gap: 3px;
    white-space: nowrap;
}

.tool .caret, .drop svg, .more svg {
    width: 8px;
    height: 8px;
}

.tool .caret {
    margin-left: -1px;
}

.tool.fx {
    padding-left: 5px;
    font: italic bold 13px "Liberation Serif", serif;
    color: #20205c;
}

.tool.marked {
    position: relative;
}

.tool.marked span {
    position: absolute;
    top: 1px;
    left: 4px;
    font: 11px/14px "Liberation Sans", sans-serif;
    color: #8c6868;
}

.tool.marked .blue {
    color: #686884;
}

.drop {
    width: 12px;
    flex: none;
    padding-left: 2px;
}

.more {
    width: 12px;
    height: 26px;
    flex: none;
    display: flex;
    flex-direction: column;
    justify-content: flex-end;
}

.tags {
    padding-left: 3px;
}

.motion {
    width: 769px;
}

.chevrons {
    margin-left: auto;
    justify-content: space-between;
    font: bold 14px/10px "Liberation Sans", sans-serif;
}

.sep {
    width: 6px;
    height: 100%;
    flex: none;
    background: linear-gradient(to right, transparent 2px, #b4b4b4 2px, #b4b4b4 3px, #f6f6f6 3px, #f6f6f6 4px, transparent 4px);
}

.combo {
    position: relative;
    display: block;
    flex: none;
    height: 16px;
    border: 1px solid #444;
    border-radius: 3px;
    background: #fff;
    overflow: hidden;
}

.combo select {
    appearance: none;
    display: block;
    width: 100%;
    height: 14px;
    line-height: 14px;
    padding: 0 0 0 1px;
}

.combo i {
    position: absolute;
    top: 0;
    right: 0;
    width: 16px;
    height: 14px;
    background: linear-gradient(#d4e8fa, #4a98dc);
    pointer-events: none;
}

.combo i svg {
    width: 14px;
    height: 14px;
    margin-left: 1px;
}

.filter {
    width: 110px;
    margin-right: 8px;
}

.scope {
    width: 116px;
    margin-right: 5px;
}

.speed {
    width: 37px;
    margin-left: 4px;
}

.speed select {
    font-size: 11px;
}

/* selection bar */
.selectbar {
    height: 27px;
    flex: none;
    display: flex;
    align-items: center;
    padding-left: 5px;
    background: linear-gradient(#c0c0c0, #d6d6d6 60%, #dadada);
    border-bottom: 1px solid #b8b8b8;
}

.snap {
    width: 23px;
    height: 22px;
    flex: none;
    display: flex;
    align-items: center;
    justify-content: center;
    border: 1px solid transparent;
    border-radius: 2px;
}

.snap svg {
    width: 17px;
    height: 17px;
}

.snap.on {
    background: #fff;
    border-color: #444;
}

.selectbar .drop {
    width: 10px;
    padding-left: 0;
}

.cueline {
    height: 22px;
    flex: none;
    display: flex;
    background: #d9d9d9;
    border-top: 1px solid #f6f6f6;
}

.cueline div {
    flex: 644;
}

.cueline div + div {
    flex: 602;
    border-left: 1px solid #f6f6f6;
    box-shadow: -1px 0 #b8b8b8;
}

/* workspace */
.workspace {
    flex: 1;
    min-height: 0;
    display: flex;
    border-top: 1px solid #777;
    background: #e9e9e9;
}

.dock {
    width: 33px;
    flex: none;
    display: flex;
    flex-direction: column;
    align-items: flex-end;
    gap: 2px;
    padding-top: 14px;
    background: linear-gradient(to right, #a4a4a4, #bababa);
    overflow: hidden;
}

.tab {
    width: 27px;
    height: 40px;
    flex: none;
    padding-left: 1px;
    border: 1px solid #555;
    border-right-color: #777;
    border-radius: 4px 0 0 4px;
    background: linear-gradient(#dcdcdc, #cacaca);
}

.tab svg {
    width: 24px;
    height: 24px;
}

.tab.active {
    width: 29px;
    height: 44px;
    border-right: 0;
    background: #e9e9e9;
}

.tab.apart {
    margin-top: 12px;
}

.tab.torn {
    height: 36px;
    border-bottom: 0;
    border-radius: 4px 0 0 0;
}

.tear {
    width: 29px;
    height: 6px;
    margin-top: -2px;
}

.dock-scroll {
    display: flex;
    flex-direction: column;
    gap: 1px;
    margin: 1px 7px 0 0;
}

.dock-scroll button {
    width: 16px;
    height: 15px;
    padding-left: 3px;
    background: #dcdcdc;
    border: 1px solid #888;
    border-top-color: #fff;
    border-left-color: #fff;
}

.dock-scroll svg {
    width: 9px;
    height: 9px;
    fill: #444;
}

.dock-scroll button:disabled svg {
    fill: #aaa;
}

.navigator {
    width: 221px;
    flex: none;
    display: flex;
    flex-direction: column;
    padding: 0 9px 4px 9px;
    background: #e9e9e9;
    border-right: 2px solid #777;
}

.navigator h2 {
    height: 34px;
    flex: none;
    display: flex;
    align-items: center;
    gap: 11px;
    margin: 0;
    padding: 2px 0 0 6px;
    font-size: 13px;
}

.navigator h2 svg {
    width: 12px;
    height: 12px;
}

.tree {
    flex: 1;
    min-height: 0;
    display: flex;
    flex-direction: column;
    border: 1px solid #444;
    background: #fff;
}

.tree-view {
    flex: 1;
    min-height: 0;
    overflow: hidden;
}

.tree table {
    width: 100%;
    table-layout: fixed;
    border-collapse: separate;
    border-spacing: 0;
}

.tree th {
    height: 17px;
    padding: 0 0 0 6px;
    text-align: left;
    font-weight: normal;
    line-height: 16px;
    background: linear-gradient(#f8f8f8, #e0e2e6);
    border-bottom: 1px solid #888;
}

.tree th:first-child {
    width: 161px;
    border-right: 1px solid #aaa;
}

.tree td {
    height: 20px;
    padding: 0;
    overflow: hidden;
    white-space: nowrap;
    font-size: 10px;
    line-height: 19px;
    color: #222;
    border-bottom: 1px solid #e4e4e4;
}

.tree td:first-child {
    border-right: 1px solid #dcdcdc;
}

.tree td + td {
    padding-left: 4px;
}

.tree tbody tr:nth-child(even) {
    background: #f7f7f7;
}

.tree .root td {
    border-bottom: 1px dotted #c08050;
}

.tree .current td {
    color: #0000a0;
}

.tree .selected td + td {
    background: #2f66c0;
}

.tree .selected label {
    flex: 1;
    margin-left: -2px;
    padding-left: 2px;
    background: #2f66c0;
    color: #fff;
}

.node {
    height: 19px;
    display: flex;
    align-items: center;
    gap: 2px;
    padding-left: 2px;
}

.node svg {
    width: 16px;
    height: 16px;
}

.l1 { padding-left: 5px; }
.l2 { padding-left: 24px; }
.l3 { padding-left: 43px; }
.l4 { padding-left: 62px; }

/* dotted lines between parent and child */
.branch {
    width: 14px;
    height: 20px;
    display: flex;
    align-items: center;
    background:
        repeating-linear-gradient(#999 0 1px, transparent 1px 2px) 4px 0 / 1px 100% no-repeat,
        repeating-linear-gradient(to right, #999 0 1px, transparent 1px 2px) 4px 10px / 10px 1px no-repeat;
}

.branch.last {
    background-size: 1px 10px, 10px 1px;
}

.branch.top {
    background-size: 0 0, 10px 1px;
}

.branch button {
    width: 9px;
    height: 9px;
    border: 1px solid #777;
    border-radius: 1px;
    background: #fff;
    font-size: 10px;
    line-height: 7px;
    display: flex;
    justify-content: center;
}

.tree input {
    appearance: none;
    width: 13px;
    height: 13px;
    flex: none;
    margin: 0;
    border: 1px solid #222;
    background: #fff;
}

.tree input:checked::after {
    content: "";
    display: block;
    width: 11px;
    height: 11px;
    background: #d01020;
    clip-path: polygon(5% 40%, 35% 60%, 90% 5%, 95% 35%, 38% 98%, 5% 70%);
}

.tree input.dim::after {
    background: #999;
}

.hscroll {
    height: 17px;
    flex: none;
    display: flex;
    gap: 2px;
    padding: 1px;
    background: #f5f5f2;
}

.hscroll button, .thumb {
    width: 16px;
    border: 1px solid #a0b8ec;
    border-radius: 2px;
    background: linear-gradient(#dce6fe, #b8ccfa);
}

.hscroll button:last-child {
    margin-left: auto;
}

.hscroll svg {
    width: 8px;
    height: 8px;
    margin: auto;
    fill: none;
    stroke: #34508c;
    stroke-width: 2;
}

.thumb {
    width: 36px;
    display: flex;
    align-items: center;
    justify-content: center;
}

.thumb i {
    width: 8px;
    height: 6px;
    background: repeating-linear-gradient(to right, #8ca8e4 0 1px, #eef 1px 2px);
}

.splitter {
    height: 12px;
    flex: none;
    display: flex;
    align-items: center;
    gap: 5px;
}

.splitter::before, .splitter::after {
    content: "";
    flex: 1;
    height: 2px;
    border-top: 1px solid #aaa;
    border-bottom: 1px solid #fff;
}

.splitter i {
    width: 33px;
    height: 6px;
    background: #ccc;
    border: 1px solid #999;
    border-top-color: #fff;
    border-left-color: #fff;
}

.fold {
    height: 23px;
    flex: none;
    display: flex;
    align-items: center;
    justify-content: space-between;
    padding: 0 5px 0 6px;
    font-weight: bold;
    text-align: left;
    white-space: nowrap;
    background:
        linear-gradient(#999, #999) right 23px top 0 / 1px 100% no-repeat,
        linear-gradient(#f2f2f2, #d6d6d6);
    border-bottom: 1px solid #888;
}

.fold svg {
    width: 12px;
    height: 12px;
    fill: none;
    stroke: #555;
    stroke-width: 2;
}

.graphics {
    flex: 1;
    min-width: 0;
    position: relative;
    margin-left: 1px;
    border: solid #e0a050;
    border-width: 1px 0 1px 1px;
    background: linear-gradient(#b5b6b7, #d2d3d4 45%, #e5e7e8 80%);
}

.scene {
    width: 100%;
    height: 100%;
}

.labels {
    font: 13px "DejaVu Sans", sans-serif;
    font-weight: 200;
}

.labels .big {
    font-size: 18px;
}

.labels.small, .labels .small {
    font-size: 12px;
}

.view-name {
    position: absolute;
    left: 4px;
    bottom: 0;
    margin: 0;
    font: 13px/16px "DejaVu Sans", sans-serif;
    color: #f0a050;
}

.bottom {
    height: 5px;
    flex: none;
    background: #e4e4e4;
    border-top: 1px solid #fff;
}
```
